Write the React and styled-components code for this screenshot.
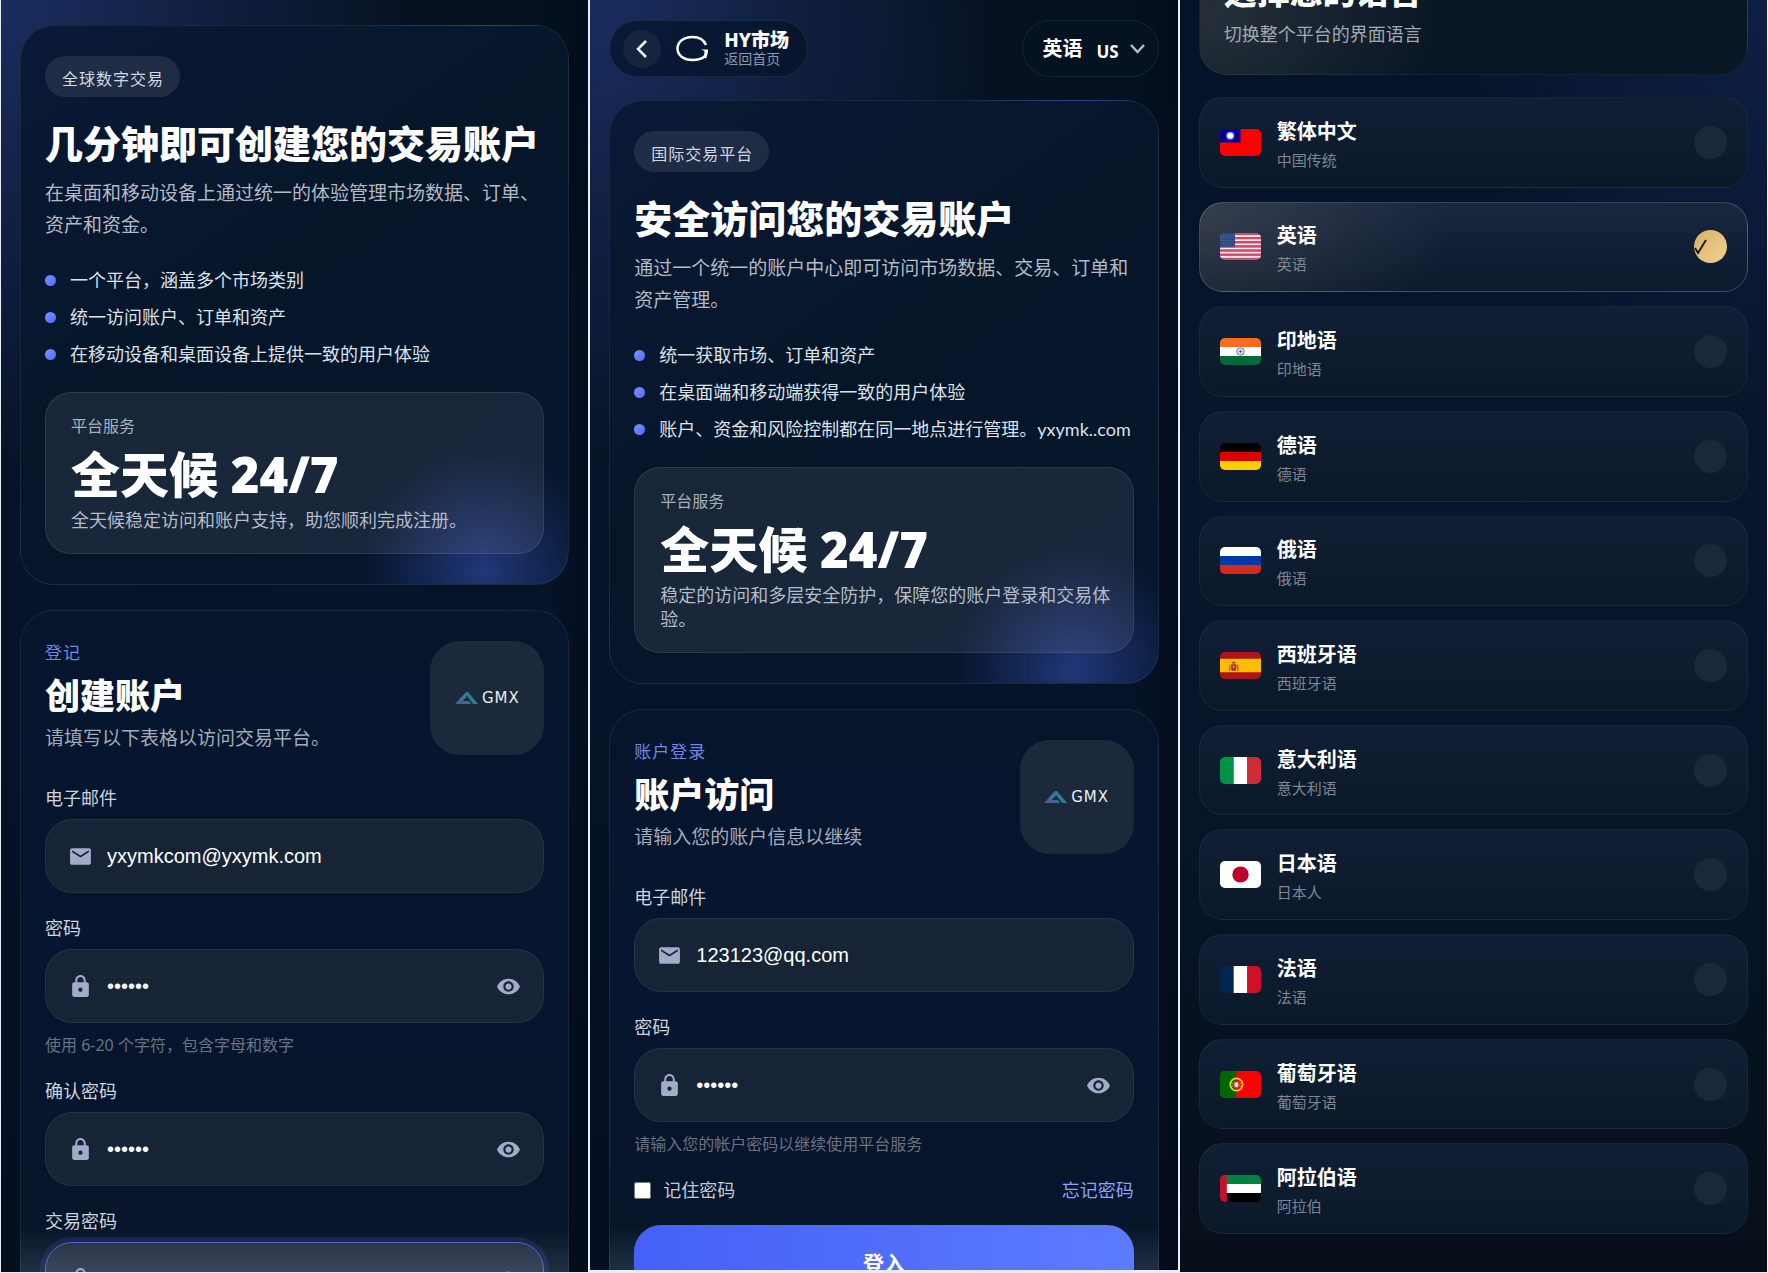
import { useState } from 'react';
import styled, { createGlobalStyle, css } from 'styled-components';
import { MdEmail, MdLock, MdVisibility } from 'react-icons/md';

const GlobalStyle = createGlobalStyle`
  * {
    box-sizing: border-box;
  }

  body {
    margin: 0;
    background: #e9edf5;
    color: #fff;
    font-family: 'Noto Sans', 'Noto Sans CJK SC', sans-serif;
    -webkit-font-smoothing: antialiased;
  }

  h1, h2, p, ul {
    margin: 0;
    padding: 0;
  }
`;

const Board = styled.main`
  display: grid;
  grid-template-columns: repeat(3, minmax(0, 1fr));
  gap: 2px;
  height: 100vh;
  padding: 0 1px 1px;
  overflow: hidden;
`;

const Screen = styled.section`
  position: relative;
  display: flex;
  flex-direction: column;
  gap: 25px;
  min-height: 0;
  overflow: hidden;
  padding: ${({ $top }) => $top}px 19px 0;
  margin-bottom: ${({ $bottom }) => $bottom || 0}px;
  background:
    radial-gradient(ellipse 420px 460px at 0 0, rgba(58, 86, 190, 0.4), transparent),
    linear-gradient(90deg, transparent 92%, rgba(1, 8, 20, 0.5)),
    linear-gradient(180deg, #05111f 0%, #06142a 45%, #051224 75%, #040f20 100%);

  &::after {
    content: '';
    position: absolute;
    left: 19px;
    right: 19px;
    bottom: 0;
    height: 44px;
    background: linear-gradient(180deg, transparent, rgba(190, 200, 230, 0.14));
    pointer-events: none;
  }
`;

const TopBar = styled.header`
  display: flex;
  align-items: center;
  justify-content: space-between;
  margin-bottom: -2px;
`;

const pill = css`
  display: flex;
  align-items: center;
  height: 57px;
  border: 1px solid rgba(255, 255, 255, 0.08);
  border-radius: 29px;
`;

const HomeLink = styled.a`
  ${pill}
  padding: 0 18px 0 13px;
  background: rgba(4, 20, 42, 0.72);
  color: #fff;
  text-decoration: none;
`;

const BackCircle = styled.span`
  display: flex;
  align-items: center;
  justify-content: center;
  width: 38px;
  height: 38px;
  margin-right: 14px;
  border-radius: 50%;
  background: #15253f;
`;

const HomeText = styled.span`
  display: flex;
  flex-direction: column;
  margin-left: 14px;
`;

const HomeName = styled.strong`
  font-size: 19px;
  line-height: 20px;
  font-weight: 800;
`;

const HomeNote = styled.small`
  font-size: 14px;
  line-height: 18px;
  color: #8e98a9;
`;

const LangPicker = styled.label`
  ${pill}
  gap: 13px;
  padding: 0 13px 0 19px;
  background: rgba(4, 18, 34, 0.7);
  font-weight: 700;
`;

const LangSelect = styled.select`
  appearance: none;
  width: 41px;
  height: 30px;
  padding: 0;
  border: 0;
  background: none;
  color: #fff;
  font: 700 20px 'Noto Sans', 'Noto Sans CJK SC', sans-serif;
`;

const Region = styled.span`
  padding-top: 6px;
  margin-right: -2px;
  font-size: 17px;
  line-height: 20px;
`;

const Card = styled.section`
  flex: none;
  padding: 30px 24px;
  border: 1px solid rgba(255, 255, 255, 0.08);
  border-radius: 34px;
`;

const HeroCard = styled(Card)`
  background:
    radial-gradient(circle at calc(100% - 84px) calc(100% - 14px), rgba(58, 86, 190, 0.52), rgba(58, 86, 190, 0.28) 54px, transparent 122px),
    linear-gradient(145deg, #0a1936 0%, #061629 45%, #05152c 100%);
`;

const FormCard = styled(Card)`
  background: linear-gradient(180deg, #05152c 0%, #071630 45%, #06152c 65%, #071626 100%);
`;

const Tag = styled.span`
  display: inline-flex;
  align-items: center;
  height: 41px;
  padding: 2px 16px 0 17px;
  border-radius: 21px;
  background: rgba(255, 255, 255, 0.09);
  color: #d3d8e0;
  font-size: 16px;
  letter-spacing: 1px;
`;

const HeroTitle = styled.h1`
  margin-top: 23px;
  font-size: 38px;
  line-height: 46px;
  font-weight: 900;
`;

const HeroText = styled.p`
  margin-top: 11px;
  font-size: 19px;
  line-height: 32px;
  color: #b4bac4;
`;

const Points = styled.ul`
  display: flex;
  flex-direction: column;
  gap: 13px;
  margin: 27px 0 26px;
  list-style: none;
`;

const Point = styled.li`
  display: flex;
  align-items: center;
  gap: 14px;
  font-family: Lato, 'Noto Sans CJK SC', sans-serif;
  font-size: 18px;
  line-height: 24px;
  color: #dde1e8;
  white-space: nowrap;

  &::before {
    content: '';
    flex: none;
    width: 11px;
    height: 11px;
    border-radius: 50%;
    background: linear-gradient(135deg, #7b92ff, #4f6bff);
  }
`;

const StatBox = styled.div`
  padding: 21px 20px 21px 25px;
  border: 1px solid rgba(255, 255, 255, 0.09);
  border-radius: 26px;
  background: rgba(255, 255, 255, 0.075);
  color: #a9b1bd;
`;

const StatLabel = styled.p`
  font-size: 16px;
  line-height: 24px;
`;

const StatValue = styled.p`
  margin: 10px 0 8px;
  font-size: 49px;
  line-height: 52px;
  font-weight: 900;
  color: #fff;
`;

const StatNote = styled.p`
  font-size: 18px;
  line-height: 24px;
  color: #b4bbc7;
`;

const FormHead = styled.div`
  display: flex;
  justify-content: space-between;
  height: 114px;
  margin-bottom: 30px;
`;

const Eyebrow = styled.p`
  font-size: 17px;
  line-height: 24px;
  letter-spacing: 1px;
  color: #7187e6;
`;

const FormTitle = styled.h2`
  margin: 10px 0 7px;
  font-size: 35px;
  line-height: 42px;
  font-weight: 900;
`;

const FormText = styled.p`
  font-size: 19px;
  line-height: 28px;
  color: #a3abb8;
`;

const BrandBox = styled.div`
  display: flex;
  align-items: center;
  justify-content: center;
  gap: 4px;
  flex: none;
  width: 114px;
  height: 114px;
  border-radius: 30px;
  background: #1c293a;
  color: #e8ebf2;
  font: 15px 'DejaVu Sans', sans-serif;
  letter-spacing: 1px;
`;

const Form = styled.form`
  display: flex;
  flex-direction: column;
  gap: 22px;
`;

const FieldLabel = styled.label`
  display: block;
  margin-bottom: 8px;
  font-size: 18px;
  line-height: 26px;
  color: #cdd3dd;
`;

const FieldBox = styled.div`
  display: flex;
  align-items: center;
  gap: 14px;
  height: 74px;
  padding: 0 22px;
  border: 1px solid ${({ $focus }) => ($focus ? '#5263c0' : 'rgba(255, 255, 255, 0.07)')};
  border-radius: 27px;
  background: ${({ $focus }) => ($focus ? 'linear-gradient(#232e43, #2a3246)' : '#172436')};
  box-shadow: ${({ $focus }) => ($focus ? '0 0 0 5px #12204a' : 'none')};
  color: #a2abc9;

  svg {
    flex: none;
  }
`;

const FieldInput = styled.input`
  flex: 1;
  min-width: 0;
  padding: 0;
  border: 0;
  outline: 0;
  background: none;
  color: #fff;
  font: 20px 'Liberation Sans', sans-serif;
`;

const EyeButton = styled.button`
  display: flex;
  padding: 0;
  border: 0;
  background: none;
  color: inherit;
`;

const Hint = styled.p`
  margin-top: 11px;
  font-size: 16px;
  line-height: 22px;
  color: #69727f;
`;

const FormRow = styled.div`
  display: flex;
  align-items: center;
  justify-content: space-between;
  font-size: 18px;
  line-height: 26px;
`;

const Remember = styled.label`
  display: flex;
  align-items: center;
  gap: 12px;
  color: #c3cad5;

  input {
    width: 17px;
    height: 17px;
    margin: 0;
  }
`;

const ForgotLink = styled.a`
  color: #8ea1fa;
  text-decoration: none;
`;

const SubmitButton = styled.button`
  position: relative;
  z-index: 1;
  height: 74px;
  border: 0;
  border-radius: 27px;
  background: linear-gradient(90deg, #4560f6, #5d7bff);
  color: #fff;
  font: 700 21px 'Noto Sans', 'Noto Sans CJK SC', sans-serif;
`;

const LangScreen = styled.section`
  display: flex;
  flex-direction: column;
  gap: 22px;
  min-height: 0;
  padding: 0 19px 38px;
  background:
    radial-gradient(ellipse 300px 420px at 100% 0, rgba(48, 76, 165, 0.22), transparent),
    linear-gradient(180deg, #05132a 0%, #06162d 40%, #061426 70%, #080f1a 100%);
`;

/* scrolled partly out of view, so the text hangs from the bottom edge */
const LangIntro = styled.header`
  display: flex;
  flex-direction: column;
  justify-content: flex-end;
  flex: none;
  height: 75px;
  overflow: hidden;
  padding: 0 24px 27px;
  border: 1px solid rgba(255, 255, 255, 0.05);
  border-top: 0;
  border-radius: 0 0 28px 28px;
  background:
    radial-gradient(ellipse 240px 150px at 0 20%, rgba(255, 240, 215, 0.12), transparent),
    #091624;
`;

const LangTitle = styled.h2`
  margin-bottom: 9px;
  font-size: 33px;
  line-height: 40px;
  font-weight: 900;
`;

const LangNote = styled.p`
  flex: none;
  font-size: 18px;
  line-height: 26px;
  color: #a2a9b4;
`;

const LangList = styled.ul`
  display: flex;
  flex: 1;
  flex-direction: column;
  gap: 14px;
  min-height: 0;
  list-style: none;
`;

const LangItem = styled.li`
  display: flex;
  flex: 1;
`;

const LangRow = styled.label`
  display: flex;
  flex: 1;
  align-items: center;
  gap: 16px;
  padding: 0 20px;
  border: 1px solid ${({ $active }) => ($active ? 'rgba(255, 255, 255, 0.18)' : 'rgba(255, 255, 255, 0.05)')};
  border-radius: 24px;
  background: ${({ $active }) =>
    $active
      ? 'radial-gradient(ellipse 250px 160px at 0 20%, rgba(255, 225, 180, 0.13), transparent), linear-gradient(#18263f, #0c1a2e)'
      : 'linear-gradient(#111f36, #0a1928)'};
`;

const FlagFrame = styled.svg`
  flex: none;
  width: 41px;
  height: 27px;
  border-radius: 5px;
`;

const LangNames = styled.span`
  display: flex;
  flex: 1;
  flex-direction: column;
  padding-top: 7px;
`;

const LangName = styled.strong`
  font-size: 20px;
  line-height: 28px;
`;

const LangSub = styled.small`
  font-size: 15px;
  line-height: 28px;
  color: #7d8694;
`;

const Pick = styled.span`
  display: grid;
  align-items: center;
  flex: none;

  > * {
    grid-area: 1 / 1;
  }
`;

const PickInput = styled.input`
  appearance: none;
  width: 33px;
  height: 33px;
  margin: 0;
  border-radius: 50%;
  background: #1b2838;

  &:checked {
    background: linear-gradient(135deg, #d9b166, #f0d293);
  }
`;

const stripes = (colors, vertical) =>
  colors.map((c, i) =>
    vertical ? (
      <rect key={i} x={i * 20} width="20" height="40" fill={c} />
    ) : (
      <rect key={i} y={(i * 40) / colors.length} width="60" height={40 / colors.length} fill={c} />
    )
  );

const flags = {
  tw: (
    <>
      <rect width="60" height="40" fill="#fe0000" />
      <rect width="30" height="20" fill="#000095" />
      <circle cx="15" cy="10" r="6" fill="#8f8fd6" />
      <circle cx="15" cy="10" r="4" fill="#fff" />
    </>
  ),
  us: (
    <>
      {stripes(Array.from({ length: 13 }, (_, i) => (i % 2 ? '#f7e9ee' : '#cf4c66')))}
      <rect width="22" height="21" fill="#2c4a7c" />
      {[3, 7, 11, 15, 19].map((y) => (
        <path key={y} d={`M2 ${y}h19`} stroke="#7f9bc0" strokeWidth="1" strokeDasharray="1 2" />
      ))}
    </>
  ),
  in: (
    <>
      {stripes(['#ff6a1f', '#ffffff', '#046a38'])}
      <circle cx="30" cy="20" r="5.5" fill="none" stroke="#6a66c4" strokeWidth="1.4" />
      <path d="M30 15v10M25 20h10M26.500 16.500l7 7M33.500 16.500l-7 7" stroke="#8f8cd4" strokeWidth=".7" />
      <circle cx="30" cy="20" r="1.6" fill="#3a36a4" />
    </>
  ),
  de: stripes(['#000000', '#dd0000', '#ffce00']),
  ru: stripes(['#ffffff', '#0039a6', '#d52b1e']),
  es: (
    <>
      <rect width="60" height="40" fill="#ad1519" />
      <rect y="10" width="60" height="20" fill="#fabd00" />
      <path d="M13 19h2v9h-2zM25 19h2v9h-2z" fill="#a5713c" />
      <path d="M16 18h8v7q0 3-4 3t-4-3z" fill="#b0343a" />
      <path d="M17 17q0-3 3-3t3 3z" fill="#8a4b2a" />
      <circle cx="20" cy="22" r="1.500" fill="#c9a6c0" />
    </>
  ),
  it: stripes(['#009246', '#ffffff', '#ce2b37'], true),
  jp: (
    <>
      <rect width="60" height="40" fill="#fff" />
      <circle cx="30" cy="20" r="12" fill="#bc002d" />
    </>
  ),
  fr: stripes(['#002654', '#ffffff', '#ce1126'], true),
  pt: (
    <>
      <rect width="60" height="40" fill="#ff0000" />
      <rect width="24" height="40" fill="#006600" />
      <circle cx="24" cy="20" r="9" fill="none" stroke="#e8d520" strokeWidth="2.500" />
      <path d="M16 17q8 8 16 0M16 24q8-7 16 0" fill="none" stroke="#e8d520" strokeWidth="1" />
      <path d="M19.500 15h9v7q0 4-4.500 4t-4.500-4z" fill="#e33" />
      <path d="M21.500 17h5v5q0 2-2.500 2t-2.500-2z" fill="#eef" />
    </>
  ),
  ae: (
    <>
      {stripes(['#00843d', '#ffffff', '#000000'])}
      <rect width="10" height="40" fill="#c8102e" />
    </>
  ),
};

const languages = [
  { code: 'tw', name: '繁体中文', sub: '中国传统' },
  { code: 'us', name: '英语', sub: '英语' },
  { code: 'in', name: '印地语', sub: '印地语' },
  { code: 'de', name: '德语', sub: '德语' },
  { code: 'ru', name: '俄语', sub: '俄语' },
  { code: 'es', name: '西班牙语', sub: '西班牙语' },
  { code: 'it', name: '意大利语', sub: '意大利语' },
  { code: 'jp', name: '日本语', sub: '日本人' },
  { code: 'fr', name: '法语', sub: '法语' },
  { code: 'pt', name: '葡萄牙语', sub: '葡萄牙语' },
  { code: 'ae', name: '阿拉伯语', sub: '阿拉伯' },
];

const Hero = ({ tag, title, text, points, note }) => (
  <HeroCard>
    <Tag>{tag}</Tag>
    <HeroTitle>{title}</HeroTitle>
    <HeroText>{text}</HeroText>
    <Points>
      {points.map((p) => (
        <Point key={p}>{p}</Point>
      ))}
    </Points>
    <StatBox>
      <StatLabel>平台服务</StatLabel>
      <StatValue>全天候 24/7</StatValue>
      <StatNote>{note}</StatNote>
    </StatBox>
  </HeroCard>
);

const Brand = () => (
  <BrandBox>
    <svg width="23" height="12" viewBox="0 0 23 12">
      <defs>
        <linearGradient id="peak" x1="0" y1="1" x2="1" y2="0">
          <stop offset="0" stopColor="#5a4aa6" />
          <stop offset=".5" stopColor="#2c7f92" />
          <stop offset="1" stopColor="#3a62a8" />
        </linearGradient>
      </defs>
      <path d="M0 12 11 0h2l10 12h-5l-6-8-4 5h6l2 3z" fill="url(#peak)" />
    </svg>
    GMX
  </BrandBox>
);

const Head = ({ eyebrow, title, text }) => (
  <FormHead>
    <div>
      <Eyebrow>{eyebrow}</Eyebrow>
      <FormTitle>{title}</FormTitle>
      <FormText>{text}</FormText>
    </div>
    <Brand />
  </FormHead>
);

const Field = ({ id, label, type = 'password', initial, hint, focus }) => {
  const [value, setValue] = useState(initial);
  const [visible, setVisible] = useState(false);
  const secret = type === 'password';

  return (
    <div>
      <FieldLabel htmlFor={id}>{label}</FieldLabel>
      <FieldBox $focus={focus}>
        {secret ? <MdLock size={25} /> : <MdEmail size={25} />}
        <FieldInput
          id={id}
          type={secret && !visible ? 'password' : 'text'}
          autoComplete="off"
          value={value}
          onChange={(e) => setValue(e.target.value)}
        />
        {secret && (
          <EyeButton type="button" aria-label="显示密码" onClick={() => setVisible(!visible)}>
            <MdVisibility size={25} />
          </EyeButton>
        )}
      </FieldBox>
      {hint && <Hint>{hint}</Hint>}
    </div>
  );
};

const SignUp = () => (
  <Screen $top={25}>
    <Hero
      tag="全球数字交易"
      title="几分钟即可创建您的交易账户"
      text="在桌面和移动设备上通过统一的体验管理市场数据、订单、资产和资金。"
      points={['一个平台，涵盖多个市场类别', '统一访问账户、订单和资产', '在移动设备和桌面设备上提供一致的用户体验']}
      note="全天候稳定访问和账户支持，助您顺利完成注册。"
    />
    <FormCard>
      <Head eyebrow="登记" title="创建账户" text="请填写以下表格以访问交易平台。" />
      <Form>
        <Field id="new-email" label="电子邮件" type="email" initial="yxymkcom@yxymk.com" />
        <Field id="new-pass" label="密码" initial="123456" hint="使用 6-20 个字符，包含字母和数字" />
        <Field id="new-pass-again" label="确认密码" initial="123456" />
        <Field id="trade-pass" label="交易密码" initial="" focus />
      </Form>
    </FormCard>
  </Screen>
);

const SignIn = () => (
  <Screen $top={20} $bottom={2}>
    <TopBar>
      <HomeLink href="#home">
        <BackCircle>
          <svg width="12" height="20" viewBox="0 0 12 20" fill="none" stroke="#fff" strokeWidth="2.500">
            <path d="M10 2 2 10l8 8" />
          </svg>
        </BackCircle>
        <svg width="35" height="27" viewBox="0 0 35 27" fill="none" stroke="#fff">
          <path d="M31 10C29 5 24 2 17.500 2 8.500 2 2.500 7 2.500 13.500S8.500 25 17.500 25c5 0 9-1 12-3.500" strokeWidth="2.500" />
          <path d="M26 14.500h7c0 4-1 7-2 9l-3-1c1-2 1.500-4 1.500-6.500z" fill="#fff" stroke="none" />
        </svg>
        <HomeText>
          <HomeName>HY市场</HomeName>
          <HomeNote>返回首页</HomeNote>
        </HomeText>
      </HomeLink>
      <LangPicker>
        <LangSelect aria-label="语言" defaultValue="us">
          <option value="us">英语</option>
        </LangSelect>
        <Region>US</Region>
        <svg width="15" height="11" viewBox="0 0 15 11" fill="none" stroke="#b5bcc9" strokeWidth="2.500">
          <path d="m1 2 6.500 7L14 2" />
        </svg>
      </LangPicker>
    </TopBar>
    <Hero
      tag="国际交易平台"
      title="安全访问您的交易账户"
      text="通过一个统一的账户中心即可访问市场数据、交易、订单和资产管理。"
      points={[
        '统一获取市场、订单和资产',
        '在桌面端和移动端获得一致的用户体验',
        '账户、资金和风险控制都在同一地点进行管理。yxymk..com',
      ]}
      note="稳定的访问和多层安全防护，保障您的账户登录和交易体验。"
    />
    <FormCard>
      <Head eyebrow="账户登录" title="账户访问" text="请输入您的账户信息以继续" />
      <Form>
        <Field id="email" label="电子邮件" type="email" initial="123123@qq.com" />
        <Field id="pass" label="密码" initial="123456" hint="请输入您的帐户密码以继续使用平台服务" />
        <FormRow>
          <Remember>
            <input type="checkbox" />
            记住密码
          </Remember>
          <ForgotLink href="#forgot">忘记密码</ForgotLink>
        </FormRow>
        <SubmitButton type="button">登入</SubmitButton>
      </Form>
    </FormCard>
  </Screen>
);

const Languages = () => {
  const [current, setCurrent] = useState('us');

  return (
    <LangScreen>
      <LangIntro>
        <LangTitle>选择您的语言</LangTitle>
        <LangNote>切换整个平台的界面语言</LangNote>
      </LangIntro>
      <LangList>
        {languages.map(({ code, name, sub }) => (
          <LangItem key={code}>
            <LangRow $active={current === code}>
              <FlagFrame viewBox="0 0 60 40" preserveAspectRatio="none" aria-hidden="true">
                {flags[code]}
              </FlagFrame>
              <LangNames>
                <LangName>{name}</LangName>
                <LangSub>{sub}</LangSub>
              </LangNames>
              <Pick>
                <PickInput
                  type="radio"
                  name="language"
                  checked={current === code}
                  onChange={() => setCurrent(code)}
                />
                {current === code && (
                  <svg width="13" height="16" viewBox="0 0 13 16" fill="none" stroke="#10151f" strokeWidth="1.800">
                    <path d="M1 9l3 5L12 1" />
                  </svg>
                )}
              </Pick>
            </LangRow>
          </LangItem>
        ))}
      </LangList>
    </LangScreen>
  );
};

const App = () => (
  <>
    <GlobalStyle />
    <Board>
      <SignUp />
      <SignIn />
      <Languages />
    </Board>
  </>
);

export default App;
